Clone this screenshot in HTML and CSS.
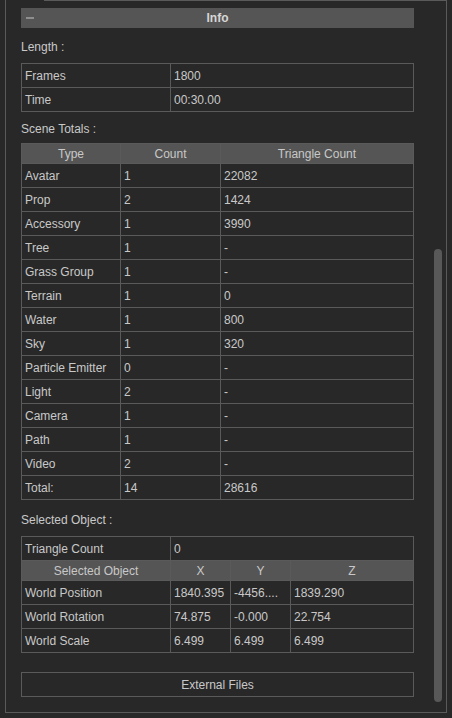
FILE: index.html
```html
<!DOCTYPE html>
<html>
<head>
<meta charset="utf-8">
<link rel="stylesheet" href="styles.css">
</head>
<body>
<div class="frame">
  <div class="frame-top"></div>
  <div class="content">
    <div class="header">
      <span class="collapse"></span>
      <span class="title">Info</span>
    </div>

    <div class="label l1">Length :</div>
    <table class="grid t1">
      <colgroup><col class="c149"><col></colgroup>
      <tr><td>Frames</td><td>1800</td></tr>
      <tr><td>Time</td><td>00:30.00</td></tr>
    </table>

    <div class="label l2">Scene Totals :</div>
    <table class="grid t2">
      <colgroup><col class="c99"><col class="c100"><col></colgroup>
      <tr class="head"><th>Type</th><th>Count</th><th>Triangle Count</th></tr>
      <tr><td>Avatar</td><td>1</td><td>22082</td></tr>
      <tr><td>Prop</td><td>2</td><td>1424</td></tr>
      <tr><td>Accessory</td><td>1</td><td>3990</td></tr>
      <tr><td>Tree</td><td>1</td><td>-</td></tr>
      <tr><td>Grass Group</td><td>1</td><td>-</td></tr>
      <tr><td>Terrain</td><td>1</td><td>0</td></tr>
      <tr><td>Water</td><td>1</td><td>800</td></tr>
      <tr><td>Sky</td><td>1</td><td>320</td></tr>
      <tr><td>Particle Emitter</td><td>0</td><td>-</td></tr>
      <tr><td>Light</td><td>2</td><td>-</td></tr>
      <tr><td>Camera</td><td>1</td><td>-</td></tr>
      <tr><td>Path</td><td>1</td><td>-</td></tr>
      <tr><td>Video</td><td>2</td><td>-</td></tr>
      <tr><td>Total:</td><td>14</td><td>28616</td></tr>
    </table>

    <div class="label l3">Selected Object :</div>
    <table class="grid t3">
      <colgroup><col class="c149"><col class="c60"><col class="c60"><col></colgroup>
      <tr><td>Triangle Count</td><td colspan="3">0</td></tr>
      <tr class="head"><th>Selected Object</th><th>X</th><th>Y</th><th>Z</th></tr>
      <tr><td>World Position</td><td>1840.395</td><td>-4456....</td><td>1839.290</td></tr>
      <tr><td>World Rotation</td><td>74.875</td><td>-0.000</td><td>22.754</td></tr>
      <tr><td>World Scale</td><td>6.499</td><td>6.499</td><td>6.499</td></tr>
    </table>

    <div class="button">External Files</div>
  </div>
  <div class="scrollbar"></div>
</div>
</body>
</html>
```
FILE: styles.css
```css
html, body {
  margin: 0;
  padding: 0;
  background: #282828;
}
body {
  font-family: "Liberation Sans", Arial, sans-serif;
  font-size: 12px;
  color: #c8c8c8;
  width: 452px;
  height: 718px;
  overflow: hidden;
}
.frame {
  position: relative;
  margin-left: 5px;
  width: 440px;
  height: 712px;
  border-left: 1px solid #5a5a5a;
  border-right: 1px solid #5a5a5a;
  border-bottom: 1px solid #5a5a5a;
}
.frame-top {
  height: 1px;
  margin-left: 38px;
  background: #5a5a5a;
}
.content {
  padding: 7px 0 0 15px;
  width: 393px;
}
.header {
  position: relative;
  height: 20px;
  background: #555555;
  display: flex;
  align-items: center;
  justify-content: center;
}
.collapse {
  position: absolute;
  left: 5px;
  top: 9px;
  width: 8px;
  height: 2px;
  background: #8e8e8e;
}
.title {
  font-weight: bold;
  color: #d6d6d6;
  line-height: 20px;
}
.label {
  line-height: 16px;
  height: 16px;
}
.l1 { padding: 11px 0 8px 0; }
.l2 { padding: 9px 0 6px 0; }
.l3 { padding: 12px 0 8px 0; }
.grid {
  border-collapse: collapse;
  width: 393px;
  table-layout: fixed;
}
.grid td, .grid th {
  border: 1px solid #5a5a5a;
  padding: 0 0 0 3px;
  height: 23px;
  line-height: 14px;
  text-align: left;
  font-weight: normal;
  white-space: nowrap;
  overflow: hidden;
}
.grid .head th {
  background: #555555;
  text-align: center;
  padding: 0;
  height: 19px;
  color: #c8c8c8;
}
.c149 { width: 149px; }
.c99 { width: 99px; }
.c100 { width: 100px; }
.c60 { width: 60px; }
.button {
  margin-top: 19px;
  height: 23px;
  border: 1px solid #5a5a5a;
  display: flex;
  align-items: center;
  justify-content: center;
  width: 391px;
}
.scrollbar {
  position: absolute;
  left: 428px;
  top: 249px;
  width: 8px;
  height: 453px;
  border-radius: 4px;
  background: #585858;
}
```
